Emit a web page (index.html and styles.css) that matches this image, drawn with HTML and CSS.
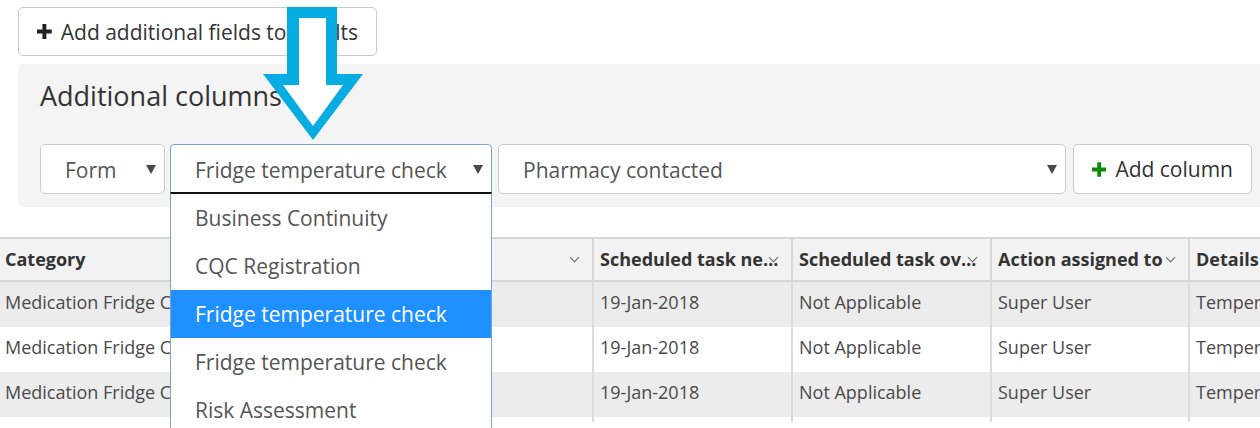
FILE: index.html
```html
<!DOCTYPE html>
<html lang="en">

<head>
    <meta charset="UTF-8">
    <meta name="viewport" content="width=device-width, initial-scale=1.0">
    <title>Report - additional columns</title>
    <link rel="stylesheet" href="styles.css">
</head>

<body>
    <div class="toolbar">
        <button class="btn btn-fields">
            <svg class="plus" width="15" height="15" viewBox="0 0 15 15"><path d="M7.5 0v15M0 7.5h15" stroke="#222" stroke-width="4"/></svg>
            Add additional fields to results
        </button>
    </div>

    <div class="panel">
        <h2 class="panel-title">Additional columns</h2>
        <div class="picker-row">
            <div class="select select-type">
                <span>Form</span>
                <i class="caret"></i>
            </div>
            <div class="select select-form is-open">
                <span>Fridge temperature check</span>
                <i class="caret"></i>
                <ul class="options">
                    <li>Business Continuity</li>
                    <li>CQC Registration</li>
                    <li class="active">Fridge temperature check</li>
                    <li>Fridge temperature check</li>
                    <li>Risk Assessment</li>
                </ul>
            </div>
            <div class="select select-field">
                <span>Pharmacy contacted</span>
                <i class="caret"></i>
            </div>
            <button class="btn btn-add">
                <svg class="plus" width="15" height="15" viewBox="0 0 15 15"><path d="M7.5 0v15M0 7.5h15" stroke="#0a8a0a" stroke-width="4"/></svg>
                Add column
            </button>
        </div>
    </div>

    <div class="grid-wrap">
        <table class="grid">
            <colgroup>
                <col style="width:594px">
                <col style="width:199px">
                <col style="width:199px">
                <col style="width:198px">
                <col style="width:200px">
            </colgroup>
            <thead>
                <tr>
                    <th><span>Category</span><i class="chev"></i></th>
                    <th><span>Scheduled task next due</span><i class="chev"></i></th>
                    <th><span>Scheduled task overdue</span><i class="chev"></i></th>
                    <th><span>Action assigned to</span><i class="chev"></i></th>
                    <th><span>Details</span></th>
                </tr>
            </thead>
            <tbody>
                <tr>
                    <td>Medication Fridge Check</td>
                    <td>19-Jan-2018</td>
                    <td>Not Applicable</td>
                    <td>Super User</td>
                    <td>Temperature</td>
                </tr>
                <tr>
                    <td>Medication Fridge Check</td>
                    <td>19-Jan-2018</td>
                    <td>Not Applicable</td>
                    <td>Super User</td>
                    <td>Temperature</td>
                </tr>
                <tr>
                    <td>Medication Fridge Check</td>
                    <td>19-Jan-2018</td>
                    <td>Not Applicable</td>
                    <td>Super User</td>
                    <td>Temperature</td>
                </tr>
                <tr>
                    <td></td>
                    <td></td>
                    <td></td>
                    <td></td>
                    <td></td>
                </tr>
            </tbody>
        </table>
    </div>

    <!-- callout arrow pointing at the form picker -->
    <svg class="callout" width="104" height="136" viewBox="263 7 104 136">
        <polygon points="287,7 337,7 337,74 363,74 313,140 263,74 287,74" fill="#07ade2"/>
        <polygon points="299,18 326,18 326,85 343,85 313,126 283,85 299,85" fill="#fff"/>
    </svg>
</body>

</html>
```

FILE: styles.css
```css
html,
body {
    margin: 0;
    padding: 0;
}

body {
    width: 1260px;
    height: 428px;
    overflow: hidden;
    position: relative;
    font-family: "Open Sans", "Liberation Sans", sans-serif;
    color: #333;
    background: #fff;
}

.toolbar {
    padding: 7px 0 0 18px;
}

.btn {
    display: flex;
    align-items: center;
    gap: 9px;
    height: 50px;
    box-sizing: border-box;
    background: #fff;
    border: 1.5px solid #cbcbcb;
    border-radius: 5px;
    font-family: inherit;
    font-size: 21px;
    color: #333;
    padding: 0 18px;
    white-space: nowrap;
    flex-shrink: 0;
}

.btn-fields {
    width: 359px;
    height: 49px;
    overflow: hidden;
}

.panel {
    margin: 8px 0 0 18px;
    height: 143px;
    box-sizing: border-box;
    padding: 14px 0 0 22px;
    background: #f4f4f4;
    border-radius: 5px 0 0 5px;
}

.panel-title {
    margin: 0;
    font-size: 27px;
    font-weight: normal;
    line-height: 36px;
    color: #333;
}

.picker-row {
    display: flex;
    margin-top: 30px;
    gap: 5px;
}

.select {
    position: relative;
    flex-shrink: 0;
    height: 50px;
    box-sizing: border-box;
    background: #fff;
    border: 1.5px solid #cbcbcb;
    border-radius: 5px;
    display: flex;
    align-items: center;
    padding: 2px 0 0 24px;
    font-size: 21px;
    color: #555;
}

.select-type {
    width: 125px;
}

.select-form {
    width: 322px;
    border: 1px solid #6aa7e3;
    border-radius: 4px 4px 0 0;
}

.select-field {
    width: 568px;
    margin-left: 1px;
}

.btn-add {
    width: 179px;
    margin-left: 2px;
}

.caret {
    position: absolute;
    right: 8px;
    top: 20px;
    width: 0;
    height: 0;
    border-left: 5px solid transparent;
    border-right: 5px solid transparent;
    border-top: 9px solid #4a4a4a;
}

.options {
    position: absolute;
    z-index: 5;
    left: -1px;
    right: -1px;
    top: 47px;
    margin: 0;
    padding: 0;
    list-style: none;
    background: #fff;
    border: 1px solid #7aa3d8;
    border-top: 2px solid #111;
    height: 300px;
}

.options li {
    height: 48px;
    line-height: 48px;
    padding-left: 24px;
    color: #555;
    font-size: 21px;
}

.options li.active {
    background: #1e90ff;
    color: #fff;
}

.grid-wrap {
    margin-top: 30px;
    overflow: hidden;
}

.grid {
    table-layout: fixed;
    width: 1390px;
    border-collapse: separate;
    border-spacing: 0;
    border-top: 2px solid #d6d6d6;
    font-size: 18px;
}

.grid th,
.grid td {
    padding: 0 7px 0 6px;
    border-right: 2px solid #d6d6d6;
    white-space: nowrap;
    overflow: hidden;
    text-align: left;
}

.grid th {
    position: relative;
    background: #f2f2f2;
    line-height: 41px;
    border-bottom: 2px solid #d6d6d6;
    font-weight: 700;
    color: #333;
    padding-right: 12px;
}

.grid th span {
    display: block;
    overflow: hidden;
    text-overflow: ellipsis;
}

.grid td {
    line-height: 40px;
    padding-bottom: 5px;
    color: #4a4a4a;
    border-right-color: #dcdcdc;
}

.grid td:first-child,
.grid th:first-child {
    padding-left: 5px;
}

.grid tbody tr:nth-child(odd) td {
    background: #ececec;
}

.chev {
    position: absolute;
    right: 14px;
    top: 15px;
    width: 6px;
    height: 6px;
    border-right: 1.3px solid #666;
    border-bottom: 1.3px solid #666;
    transform: rotate(45deg);
}

.callout {
    position: absolute;
    left: 263px;
    top: 7px;
    z-index: 10;
}
```
